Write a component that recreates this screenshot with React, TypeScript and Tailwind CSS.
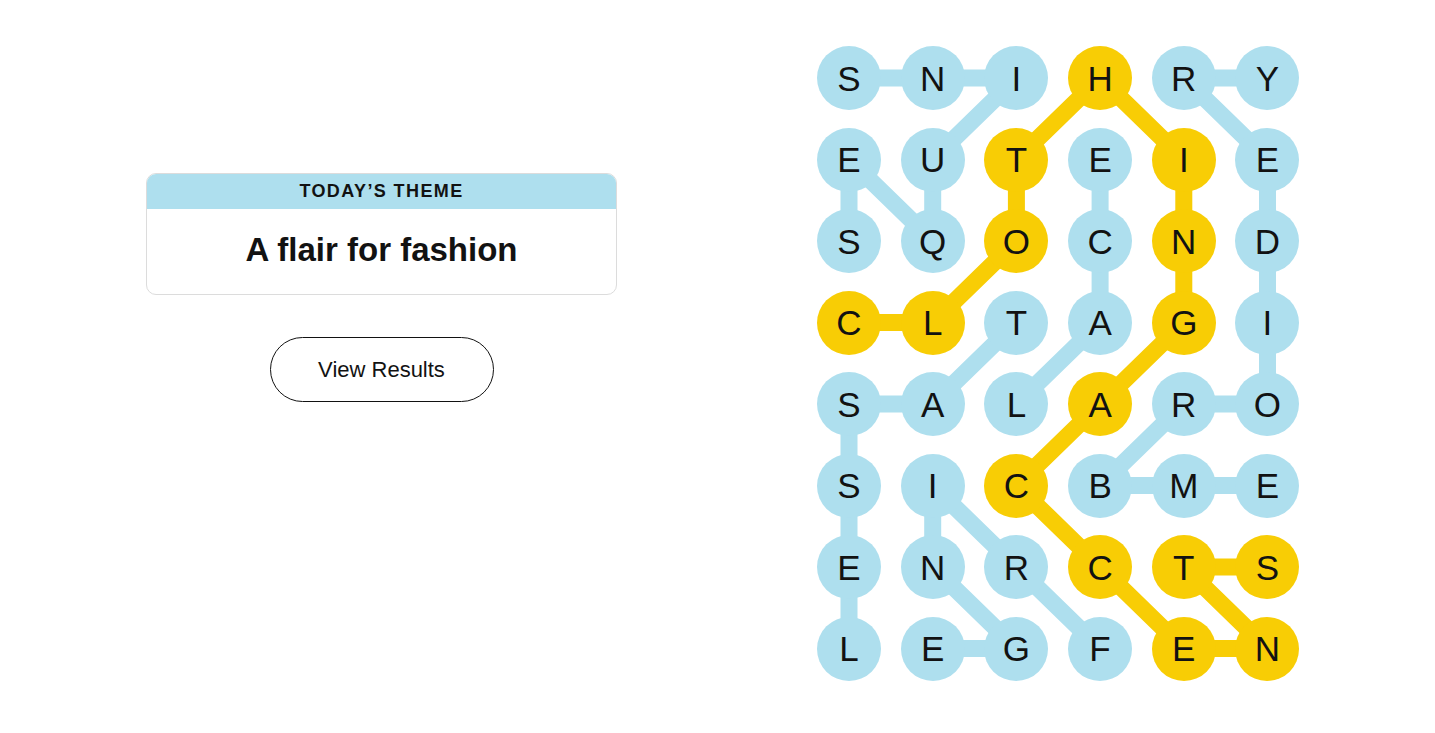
import React from "react";

const LETTERS = [
  "SNIHRY",
  "EUTEIE",
  "SQOCND",
  "CLTAGI",
  "SALARO",
  "SICBME",
  "ENRCTS",
  "LEGFEN",
];

type P = [number, number];

const BLUE = "#aedfee";
const YELLOW = "#f8cd05";

const WORDS: { path: P[]; span?: boolean }[] = [
  { path: [[2, 0], [1, 0], [2, 1], [1, 1], [0, 2], [0, 1], [0, 0]] },
  { path: [[5, 5], [5, 4], [5, 3], [4, 4], [4, 5], [3, 5], [2, 5], [1, 5], [0, 4], [0, 5]] },
  { path: [[3, 2], [4, 1], [4, 0], [5, 0], [6, 0], [7, 0]] },
  { path: [[4, 2], [3, 3], [2, 3], [1, 3]] },
  { path: [[7, 3], [6, 2], [5, 1], [6, 1], [7, 2], [7, 1]] },
  {
    span: true,
    path: [[3, 0], [3, 1], [2, 2], [1, 2], [0, 3], [1, 4], [2, 4], [3, 4], [4, 3], [5, 2], [6, 3], [7, 4], [7, 5], [6, 4], [6, 5]],
  },
];

const CELL = 64;
const STEP_X = 83.7;
const STEP_Y = 81.5;

const yellowSet = new Set<string>();
WORDS.forEach((w) => {
  if (w.span) w.path.forEach(([r, c]) => yellowSet.add(`${r}-${c}`));
});

const cx = (c: number) => CELL / 2 + c * STEP_X;
const cy = (r: number) => CELL / 2 + r * STEP_Y;

export default function App() {
  const width = CELL + 5 * STEP_X;
  const height = CELL + 7 * STEP_Y;
  return (
    <div
      className="w-[1435px] h-[733px] bg-white flex items-start text-[#121212]"
      style={{ fontFamily: '"Liberation Sans", Arial, sans-serif' }}
    >
      <div className="ml-[146px] mt-[173px] w-[471px] flex flex-col items-center">
        <div className="w-full rounded-[10px] border border-[#dcdcdc] overflow-hidden">
          <div className="bg-[#aedfee] h-[35px] flex items-center justify-center text-[18px] font-bold tracking-[1.4px]">
            TODAY’S THEME
          </div>
          <div className="h-[85px] flex items-center justify-center pb-[4px] text-[33px] font-bold">
            A flair for fashion
          </div>
        </div>
        <button className="mt-[42px] w-[224px] h-[65px] rounded-full border border-[#121212] bg-white text-[22px] text-[#121212]">
          View Results
        </button>
      </div>

      <div className="ml-[200px] mt-[46px] relative w-[482.5px] h-[634.5px]">
        <svg
          className="absolute inset-0"
          width={width}
          height={height}
          viewBox={`0 0 ${width} ${height}`}
        >
          {WORDS.map((w, i) => (
            <polyline
              key={i}
              points={w.path.map(([r, c]) => `${cx(c)},${cy(r)}`).join(" ")}
              fill="none"
              stroke={w.span ? YELLOW : BLUE}
              strokeWidth={17}
              strokeLinejoin="round"
              strokeLinecap="round"
            />
          ))}
        </svg>
        <div className="relative grid grid-cols-[repeat(6,64px)] grid-rows-[repeat(8,64px)] gap-x-[19.7px] gap-y-[17.5px]">
          {LETTERS.map((row, r) =>
            row.split("").map((ch, c) => (
              <div
                key={`${r}-${c}`}
                className={`w-[64px] h-[64px] rounded-full flex items-center justify-center text-[35px] leading-none ${
                  yellowSet.has(`${r}-${c}`) ? "bg-[#f8cd05]" : "bg-[#aedfee]"
                }`}
              >
                {ch}
              </div>
            ))
          )}
        </div>
      </div>
    </div>
  );
}
